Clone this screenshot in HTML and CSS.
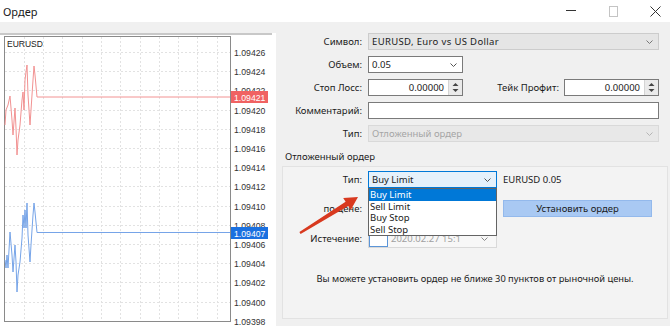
FILE: index.html
```html
<!DOCTYPE html>
<html lang="ru">
<head>
  <meta charset="UTF-8" />
  <title>Ордер</title>
  <link rel="stylesheet" href="styles.css">
</head>
<body>
<div class="window">

  <!-- ЗАГОЛОВОК ОКНА -->
  <div class="titlebar">
    <span class="title">Ордер</span>
    <div class="controls">
      <span class="ctl"><svg width="10" height="10" viewBox="0 0 10 10"><line x1="0" y1="4.5" x2="10" y2="4.5" stroke="#333" stroke-width="1"/></svg></span>
      <span class="ctl"><svg width="9" height="11" viewBox="0 0 9 11"><rect x="0.5" y="0.5" width="8" height="10" fill="none" stroke="#c4c4c4" stroke-width="1"/></svg></span>
      <span class="ctl"><svg width="11" height="11" viewBox="0 0 11 11"><path d="M0.5 0.5 L10.5 10.5 M10.5 0.5 L0.5 10.5" stroke="#333" stroke-width="1"/></svg></span>
    </div>
  </div>

  <div class="main">

    <!-- ГРАФИК -->
    <div class="chart">
      <svg class="chart-svg" width="276" height="293" viewBox="0 33 276 293">
        <rect x="0" y="33" width="276" height="293" fill="#fff"/>
        <line x1="0" y1="34" x2="272" y2="34" stroke="#c8c8c8" stroke-width="2"/>
        <g stroke="#e2e2e2" stroke-width="1" stroke-dasharray="2 2">
          <line x1="24.5" y1="37" x2="24.5" y2="321"/>
          <line x1="43.5" y1="37" x2="43.5" y2="321"/>
          <line x1="62.5" y1="37" x2="62.5" y2="321"/>
          <line x1="82.5" y1="37" x2="82.5" y2="321"/>
          <line x1="101.5" y1="37" x2="101.5" y2="321"/>
          <line x1="120.5" y1="37" x2="120.5" y2="321"/>
          <line x1="140.5" y1="37" x2="140.5" y2="321"/>
          <line x1="159.5" y1="37" x2="159.5" y2="321"/>
          <line x1="178.5" y1="37" x2="178.5" y2="321"/>
          <line x1="197.5" y1="37" x2="197.5" y2="321"/>
          <line x1="217.5" y1="37" x2="217.5" y2="321"/>
          <line x1="5" y1="52.5" x2="230" y2="52.5"/>
          <line x1="5" y1="71.5" x2="230" y2="71.5"/>
          <line x1="5" y1="90.5" x2="230" y2="90.5"/>
          <line x1="5" y1="110.5" x2="230" y2="110.5"/>
          <line x1="5" y1="129.5" x2="230" y2="129.5"/>
          <line x1="5" y1="148.5" x2="230" y2="148.5"/>
          <line x1="5" y1="167.5" x2="230" y2="167.5"/>
          <line x1="5" y1="186.5" x2="230" y2="186.5"/>
          <line x1="5" y1="206.5" x2="230" y2="206.5"/>
          <line x1="5" y1="225.5" x2="230" y2="225.5"/>
          <line x1="5" y1="244.5" x2="230" y2="244.5"/>
          <line x1="5" y1="263.5" x2="230" y2="263.5"/>
          <line x1="5" y1="282.5" x2="230" y2="282.5"/>
          <line x1="5" y1="302.5" x2="230" y2="302.5"/>
        </g>
        <rect x="4.5" y="36.5" width="226" height="285" fill="none" stroke="#8a8a8a" stroke-width="1"/>
        <text class="sym-label" x="7" y="47">EURUSD</text>

        <polyline fill="none" stroke="#f29292" stroke-width="1"
          points="5,125 6,110 8,105 10,96 12,120 13,135 15,108 16,128 17,155 18,140 20,125 22,100 23,92 24,110 25,80 26,72 27,65 28,95 30,125 31,110 33,80 34,66 35,75 37,97 230,97"/>
        <polyline fill="none" stroke="#76a4e8" stroke-width="1"
          points="5,260 6,268 7,255 8,268 10,232 12,255 13,272 15,245 16,262 17,292 18,275 20,262 22,238 23,215 24,228 25,210 26,228 27,203 28,235 30,262 31,245 33,215 34,203 35,212 37,232.5 230,232.5"/>

        <g class="axis">
          <text x="234" y="56">1.09426</text>
          <text x="234" y="75">1.09424</text>
          <text x="234" y="94">1.09422</text>
          <text x="234" y="114">1.09420</text>
          <text x="234" y="133">1.09418</text>
          <text x="234" y="152">1.09416</text>
          <text x="234" y="171">1.09414</text>
          <text x="234" y="190">1.09412</text>
          <text x="234" y="210">1.09410</text>
          <text x="234" y="229">1.09408</text>
          <text x="234" y="248">1.09406</text>
          <text x="234" y="267">1.09404</text>
          <text x="234" y="286">1.09402</text>
          <text x="234" y="306">1.09400</text>
          <text x="234" y="325">1.09398</text>
        </g>

        <rect x="231" y="91" width="37" height="12" fill="#f06262"/>
        <text class="tag" x="234" y="100.5">1.09421</text>
        <rect x="231" y="227" width="37" height="12" fill="#1a70e0"/>
        <text class="tag" x="234" y="236.5">1.09407</text>
      </svg>
    </div>

    <!-- ПАНЕЛЬ ОРДЕРА -->
    <div class="panel">
      <div class="order-form">
        <label>Символ:</label>
        <div class="combo gray"><span class="wide-text">EURUSD, Euro vs US Dollar</span><svg class="chev" width="7" height="4" viewBox="0 0 7 4"><polyline points="0.5,0.5 3.5,3.5 6.5,0.5" fill="none" stroke="#777" stroke-width="1"/></svg></div>

        <label>Объем:</label>
        <div><div class="combo small"><span>0.05</span><svg class="chev" width="7" height="4" viewBox="0 0 7 4"><polyline points="0.5,0.5 3.5,3.5 6.5,0.5" fill="none" stroke="#555" stroke-width="1"/></svg></div></div>

        <label>Стоп Лосс:</label>
        <div class="sl-row">
          <div class="spin">
            <span class="spin-val">0.00000</span>
            <span class="spin-btn"><svg width="9" height="13" viewBox="0 0 9 13"><polygon points="1.5,5 4.5,2 7.5,5" fill="#444"/><polygon points="1.5,8 4.5,11 7.5,8" fill="#444"/></svg></span>
          </div>
          <label class="tp-label">Тейк Профит:</label>
          <div class="spin">
            <span class="spin-val">0.00000</span>
            <span class="spin-btn"><svg width="9" height="13" viewBox="0 0 9 13"><polygon points="1.5,5 4.5,2 7.5,5" fill="#444"/><polygon points="1.5,8 4.5,11 7.5,8" fill="#444"/></svg></span>
          </div>
        </div>

        <label>Комментарий:</label>
        <div class="text-input"></div>

        <label>Тип:</label>
        <div class="combo disabled"><span>Отложенный ордер</span><svg class="chev" width="7" height="4" viewBox="0 0 7 4"><polyline points="0.5,0.5 3.5,3.5 6.5,0.5" fill="none" stroke="#b5b5b5" stroke-width="1"/></svg></div>
      </div>

      <div class="pending-title">Отложенный ордер</div>
      <div class="pending-box">
        <div class="pending-form">
          <label>Тип:</label>
          <div class="ctrl-row">
            <div class="select-wrap">
              <div class="combo focus"><span>Buy Limit</span><svg class="chev" width="7" height="4" viewBox="0 0 7 4"><polyline points="0.5,0.5 3.5,3.5 6.5,0.5" fill="none" stroke="#555" stroke-width="1"/></svg></div>
              <ul class="drop-list">
                <li class="active">Buy Limit</li>
                <li>Sell Limit</li>
                <li>Buy Stop</li>
                <li>Sell Stop</li>
              </ul>
            </div>
            <span class="sym-info">EURUSD 0.05</span>
          </div>

          <label>по цене:</label>
          <div class="ctrl-row">
            <div class="price-input"></div>
            <button type="button" class="btn-set">Установить ордер</button>
          </div>

          <label class="exp-label">Истечение:</label>
          <div class="ctrl-row">
            <div class="date-input">
              <span class="check"></span>
              <span class="date-val">2020.02.27 15:10</span>
              <svg class="chev" width="7" height="4" viewBox="0 0 7 4"><polyline points="0.5,0.5 3.5,3.5 6.5,0.5" fill="none" stroke="#888" stroke-width="1"/></svg>
            </div>
          </div>
        </div>
        <p class="info">Вы можете установить ордер не ближе 30 пунктов от рыночной цены.</p>
      </div>
    </div>
  </div>

  <!-- СТРЕЛКА -->
  <svg class="arrow" width="670" height="326" viewBox="0 0 670 326">
    <polygon points="299.4,231.9 345.6,201.7 343.2,198.0 358,197 350.7,209.9 348.3,206.1 300.6,234.1" fill="#d8391f"/>
  </svg>
</div>
</body>
</html>
```

FILE: styles.css
```css
* {
  box-sizing: border-box;
}

body {
  margin: 0;
  width: 670px;
  height: 326px;
  overflow: hidden;
  font-family: "Noto Sans", "Liberation Sans", sans-serif;
  font-size: 9.5px;
  color: #1a1a1a;
  background: #f0f0f0;
}

.window {
  position: relative;
  height: 326px;
}

/* === ЗАГОЛОВОК === */
.titlebar {
  height: 22px;
  background: #fff;
  display: flex;
  align-items: center;
  justify-content: space-between;
}

.title {
  font-size: 11px;
  padding-left: 3px;
}

.controls {
  display: flex;
  align-items: center;
  height: 100%;
  margin-right: -6px;
}

.ctl {
  width: 42px;
  display: flex;
  justify-content: center;
  align-items: center;
}

/* === ОСНОВНАЯ ОБЛАСТЬ === */
.main {
  display: flex;
  height: 304px;
}

.chart {
  width: 276px;
  padding-top: 11px;
}

.chart-svg {
  display: block;
}

.chart-svg text {
  font-family: "Liberation Sans", Arial, sans-serif;
  font-size: 8.7px;
  fill: #333;
}

.chart-svg .sym-label {
  font-size: 8.5px;
  fill: #222;
}

.chart-svg .tag {
  fill: #fff;
}

.panel {
  flex: 1;
  padding: 11px 2px 0 2px;
}

/* === ФОРМА === */
.order-form {
  display: grid;
  grid-template-columns: 84px 1fr;
  column-gap: 6px;
  row-gap: 6px;
  align-items: center;
  margin-right: 9px;
}

label {
  text-align: right;
  white-space: nowrap;
}

.combo {
  height: 17px;
  border: 1px solid #7a7a7a;
  background: #fff;
  display: flex;
  align-items: center;
  justify-content: space-between;
  padding: 0 5px 0 3px;
}

.combo.gray {
  background: #e5e5e5;
  border-color: #cccccc;
}

.wide-text {
  letter-spacing: 0.35px;
}

.combo.disabled {
  background: #e8e8e8;
  border-color: #d9d9d9;
  color: #a5a5a5;
}

.combo.small {
  width: 95px;
}

.combo.focus {
  width: 129px;
  background: #e5f1fb;
  border-color: #0078d7;
}

.chev {
  flex-shrink: 0;
}

.sl-row {
  display: flex;
  align-items: center;
}

.spin {
  width: 95px;
  height: 17px;
  display: flex;
  border: 1px solid #7a7a7a;
  background: #fff;
}

.spin-val {
  flex: 1;
  text-align: right;
  padding-right: 4px;
  line-height: 15px;
}

.spin-btn {
  width: 14px;
  display: flex;
  justify-content: center;
  align-items: center;
  background: #eaeaea;
  border-left: 1px solid #d4d4d4;
}

.tp-label {
  flex: 1;
  margin-right: 5px;
}

.text-input {
  height: 17px;
  border: 1px solid #7a7a7a;
  background: #fff;
}

/* === ОТЛОЖЕННЫЙ ОРДЕР === */
.pending-title {
  margin-top: 7px;
  padding-left: 7px;
  height: 15px;
  line-height: 15px;
}

.pending-box {
  margin: 2px 0 0 4px;
  height: 153px;
  border: 1px solid #e2e2e2;
  background: #f3f3f3;
}

.pending-form {
  display: grid;
  grid-template-columns: 79px 1fr;
  column-gap: 6px;
  row-gap: 12px;
  align-items: center;
  padding-top: 4px;
}

.ctrl-row {
  display: flex;
  align-items: center;
}

.select-wrap {
  position: relative;
}

.drop-list {
  position: absolute;
  top: 100%;
  left: 0;
  width: 129px;
  margin: 0;
  padding: 0;
  list-style: none;
  background: #fff;
  border: 1px solid #646464;
  z-index: 5;
}

.drop-list li {
  height: 11.5px;
  line-height: 11.5px;
  padding-left: 1px;
}

.drop-list li.active {
  background: #0078d7;
  color: #fff;
}

.sym-info {
  margin-left: 6px;
}

.price-input {
  width: 129px;
  height: 17px;
  border: 1px solid #7a7a7a;
  background: #fff;
}

.btn-set {
  margin-left: 6px;
  width: 149px;
  height: 17px;
  padding: 0;
  font-family: inherit;
  font-size: 9.5px;
  color: #1a1a1a;
  background: #a9c9f3;
  border: 1px solid #93b9ec;
}

.date-input {
  width: 129px;
  height: 19px;
  display: flex;
  align-items: center;
  border: 1px solid #d9d9d9;
  background: #f7f7f7;
}

.check {
  width: 19px;
  height: 17px;
  background: #fff;
  border: 1px solid #5b95d8;
  flex-shrink: 0;
}

.date-val {
  width: 69px;
  overflow: hidden;
  white-space: nowrap;
  color: #a0a0a0;
  margin-left: 3px;
  margin-right: 21px;
}

.info {
  margin: 24px 0 0;
  text-align: center;
  line-height: 14px;
  font-size: 9.3px;
}

/* === СТРЕЛКА === */
.arrow {
  position: absolute;
  left: 0;
  top: 0;
  pointer-events: none;
}
```
